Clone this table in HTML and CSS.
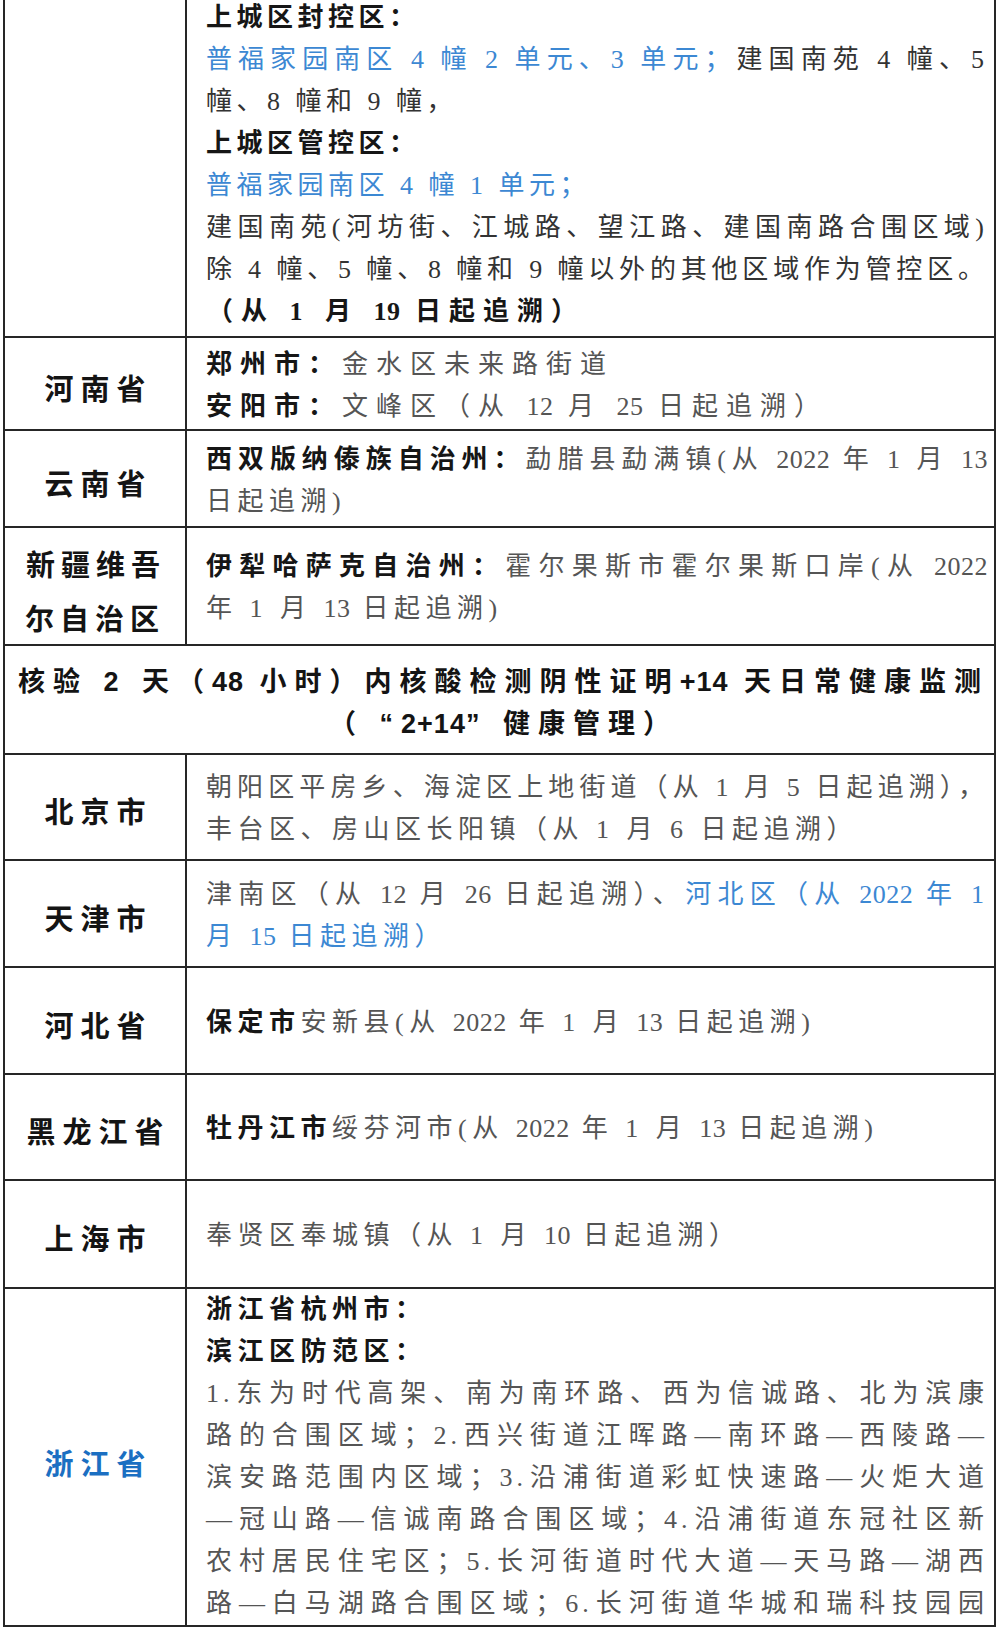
FILE: index.html
```html
<!DOCTYPE html>
<html lang="zh-CN">
<head>
<meta charset="utf-8">
<title>防控区域</title>
<link rel="stylesheet" href="styles.css">
</head>
<body>
<div class="page">
<table class="grid">
  <colgroup><col class="c-name"><col class="c-body"></colgroup>
  <tr class="r-a">
    <td class="name"></td>
    <td class="body top first">
      <div class="line b">上城区封控区：</div>
      <div class="line full dk"><span class="blue">普福家园南区 4 幢 2 单元、3 单元；</span>建国南苑 4 幢、5</div>
      <div class="line dk">幢、8 幢和 9 幢，</div>
      <div class="line b">上城区管控区：</div>
      <div class="line blue">普福家园南区 4 幢 1 单元；</div>
      <div class="line full dk">建国南苑(河坊街、江城路、望江路、建国南路合围区域)</div>
      <div class="line full dk">除 4 幢、5 幢、8 幢和 9 幢以外的其他区域作为管控区。</div>
      <div class="line b wide">（从 1 月 <span class="n">19</span> 日起追溯）</div>
    </td>
  </tr>
  <tr class="r-henan">
    <td class="name">河南省</td>
    <td class="body spaced">
      <div class="line"><span class="b wider">郑州市：</span><span class="wider">金水区未来路街道</span></div>
      <div class="line"><span class="b wider">安阳市：</span>文峰区（从 <span class="n">12</span> 月 <span class="n">25</span> 日起追溯）</div>
    </td>
  </tr>
  <tr class="r-yunnan">
    <td class="name">云南省</td>
    <td class="body">
      <div class="line full"><span class="b">西双版纳傣族自治州：</span>勐腊县勐满镇(从 <span class="n">2022</span> 年 1 月 <span class="n">13</span></div>
      <div class="line">日起追溯)</div>
    </td>
  </tr>
  <tr class="r-xinjiang">
    <td class="name two">新疆维吾<br>尔自治区</td>
    <td class="body">
      <div class="line full"><span class="b">伊犁哈萨克自治州：</span>霍尔果斯市霍尔果斯口岸(从 <span class="n">2022</span></div>
      <div class="line">年 1 月 <span class="n">13</span> 日起追溯)</div>
    </td>
  </tr>
  <tr class="r-head">
    <td class="head" colspan="2">
      <div class="hline">核验 2 天（<span class="n">48</span> 小时）内核酸检测阴性证明<span class="n">+14</span> 天日常健康监测</div>
      <div class="hline">（ “<span class="n">2+14</span>” 健康管理）</div>
    </td>
  </tr>
  <tr class="r-beijing">
    <td class="name">北京市</td>
    <td class="body">
      <div class="line full">朝阳区平房乡、海淀区上地街道（从 1 月 5 日起追溯），</div>
      <div class="line">丰台区、房山区长阳镇（从 1 月 6 日起追溯）</div>
    </td>
  </tr>
  <tr class="r-tianjin">
    <td class="name">天津市</td>
    <td class="body">
      <div class="line full">津南区（从 <span class="n">12</span> 月 <span class="n">26</span> 日起追溯）、<span class="blue">河北区（从 <span class="n">2022</span> 年 1</span></div>
      <div class="line blue">月 <span class="n">15</span> 日起追溯）</div>
    </td>
  </tr>
  <tr class="r-hebei">
    <td class="name">河北省</td>
    <td class="body">
      <div class="line"><span class="b">保定市</span>安新县(从 <span class="n">2022</span> 年 1 月 <span class="n">13</span> 日起追溯)</div>
    </td>
  </tr>
  <tr class="r-hlj">
    <td class="name">黑龙江省</td>
    <td class="body">
      <div class="line"><span class="b">牡丹江市</span>绥芬河市(从 <span class="n">2022</span> 年 1 月 <span class="n">13</span> 日起追溯)</div>
    </td>
  </tr>
  <tr class="r-sh">
    <td class="name">上海市</td>
    <td class="body">
      <div class="line">奉贤区奉城镇（从 1 月 <span class="n">10</span> 日起追溯）</div>
    </td>
  </tr>
  <tr class="r-zj">
    <td class="name zj">浙江省</td>
    <td class="body top zj-body">
      <div class="line b">浙江省杭州市：</div>
      <div class="line b">滨江区防范区：</div>
      <div class="line full">1.东为时代高架、南为南环路、西为信诚路、北为滨康</div>
      <div class="line full">路的合围区域；2.西兴街道江晖路—南环路—西陵路—</div>
      <div class="line full">滨安路范围内区域；3.沿浦街道彩虹快速路—火炬大道</div>
      <div class="line full">—冠山路—信诚南路合围区域；4.沿浦街道东冠社区新</div>
      <div class="line full">农村居民住宅区；5.长河街道时代大道—天马路—湖西</div>
      <div class="line full">路—白马湖路合围区域；6.长河街道华城和瑞科技园园</div>
    </td>
  </tr>
</table>
</div>
</body>
</html>
```

FILE: styles.css
```css
html, body {
  margin: 0;
  padding: 0;
  background: #ffffff;
}

.page {
  width: 1000px;
  height: 1629px;
  overflow: hidden;
  padding-left: 3px;
  box-sizing: border-box;
}

.grid {
  margin-top: -3px;
  width: 993px;
  border-collapse: collapse;
  table-layout: fixed;
  border: 2px solid #262626;
  border-top: 0;
}

.c-name { width: 182px; }

.grid td {
  border: 2px solid #262626;
  padding: 0;
}

.grid tr:first-child td { border-top: 0; }

.r-a { height: 340px; }
.r-henan { height: 93px; }
.r-yunnan { height: 97px; }
.r-xinjiang { height: 116px; }
.r-head { height: 109px; }
.r-beijing { height: 106px; }
.r-tianjin { height: 107px; }
.r-hebei { height: 107px; }
.r-hlj { height: 106px; }
.r-sh { height: 108px; }
.r-zj { height: 338px; }

.name {
  text-align: center;
  vertical-align: middle;
  font-family: "Noto Sans CJK SC", sans-serif;
  font-weight: 700;
  font-size: 29px;
  letter-spacing: 7px;
  text-indent: 7px;
  color: #141414;
  line-height: 40px;
  padding-top: 6px !important;
}

.name.two {
  line-height: 54px;
  letter-spacing: 6px;
  text-indent: 2px;
  padding-top: 8px !important;
}

.name.zj {
  color: #1b6fc2;
  padding-top: 10px !important;
}

.body {
  vertical-align: middle;
  padding: 4px 6px 0 19px !important;
  font-family: "Liberation Serif", "Noto Sans CJK SC", serif;
  font-size: 26px;
  letter-spacing: 5.5px;
  color: #555555;
}

.body.first { letter-spacing: 4.5px; }

.body.spaced { letter-spacing: 8px; }

.body.top {
  vertical-align: top;
  padding-top: 0 !important;
}

.zj-body { padding-top: 5px !important; }

.line {
  line-height: 42px;
  white-space: nowrap;
  text-align: left;
}

.line.full {
  letter-spacing: 4px;
  text-align: justify;
  text-align-last: justify;
}

.n { letter-spacing: 0.5px; }

.b {
  font-weight: 700;
  color: #161616;
}

.dk { color: #333333; }

.blue { color: #3c88d3; }

.wide { letter-spacing: 8px; padding-left: 1px; }

.wider { letter-spacing: 8px; }

.head {
  text-align: center;
  vertical-align: middle;
  font-family: "Liberation Sans", "Noto Sans CJK SC", sans-serif;
  font-weight: 700;
  font-size: 27px;
  letter-spacing: 8px;
  color: #141414;
  padding-top: 6px !important;
}

.head .n { letter-spacing: 1px; }

.hline {
  line-height: 42px;
  white-space: nowrap;
  text-indent: 8px;
}
```
